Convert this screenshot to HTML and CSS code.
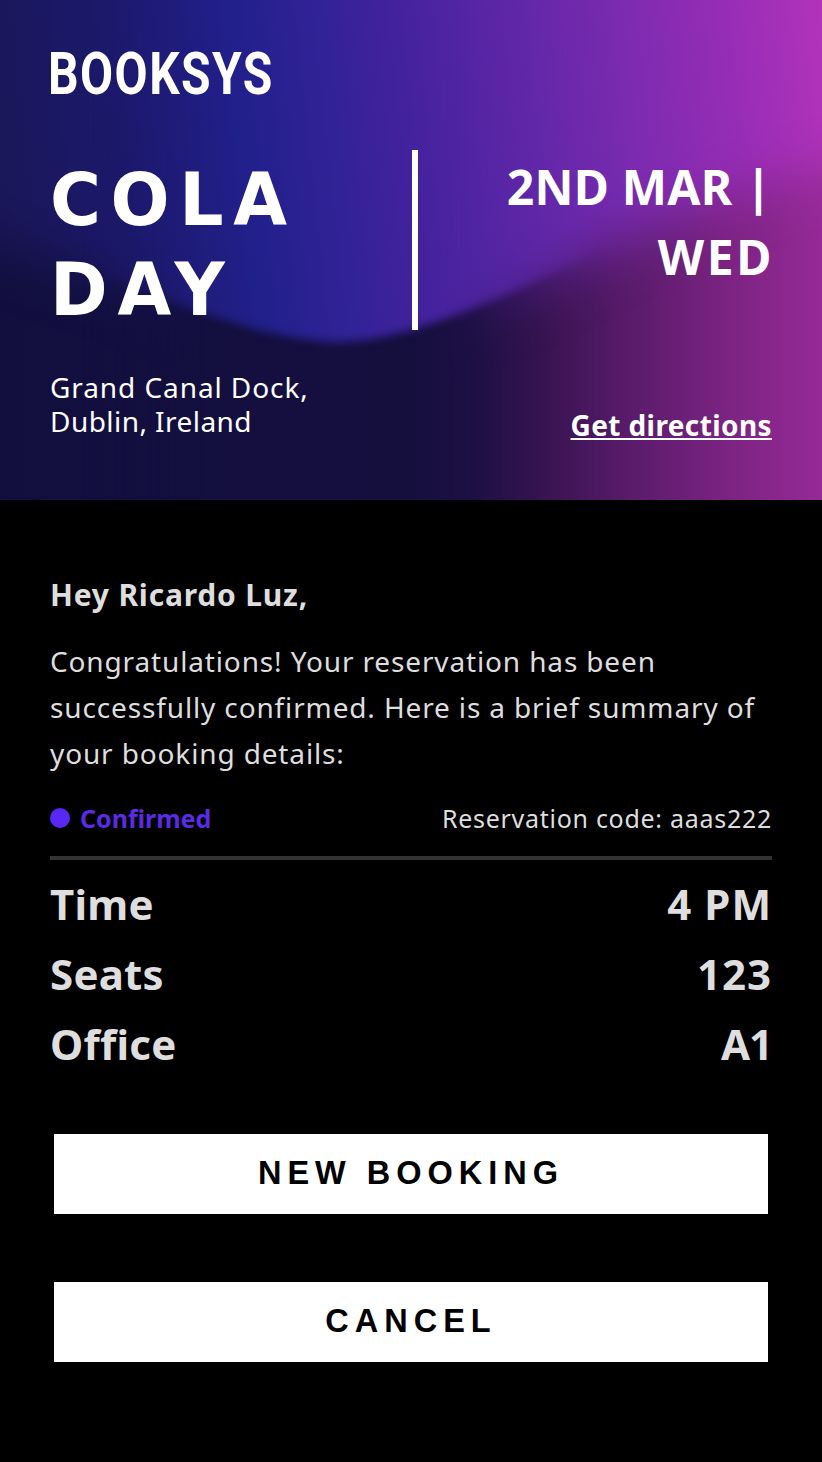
FILE: index.html
```html
<!DOCTYPE html>
<html lang="en">
<head>
<meta charset="utf-8">
<title>BOOKSYS – Cola Day</title>
<link rel="stylesheet" href="styles.css">
</head>
<body>
<header class="hero">
  <svg class="hero-art" viewBox="0 0 822 500" preserveAspectRatio="none" aria-hidden="true">
    <defs>
      <linearGradient id="sky" gradientUnits="userSpaceOnUse" x1="-8" y1="90" x2="822" y2="0">
        <stop offset="0" stop-color="#1a175a"/>
        <stop offset=".15" stop-color="#1c196c"/>
        <stop offset=".3" stop-color="#22208c"/>
        <stop offset=".39" stop-color="#302296"/>
        <stop offset=".5" stop-color="#45229e"/>
        <stop offset=".63" stop-color="#5f27a8"/>
        <stop offset=".76" stop-color="#7c2bb0"/>
        <stop offset=".89" stop-color="#982db6"/>
        <stop offset="1" stop-color="#b333bb"/>
      </linearGradient>
      <linearGradient id="ground" gradientUnits="userSpaceOnUse" x1="0" y1="0" x2="822" y2="0">
        <stop offset="0" stop-color="#120f3f"/>
        <stop offset=".5" stop-color="#150f3e"/>
        <stop offset=".58" stop-color="#1e1044"/>
        <stop offset=".65" stop-color="#34134f"/>
        <stop offset=".76" stop-color="#571b69"/>
        <stop offset=".88" stop-color="#7a2381"/>
        <stop offset="1" stop-color="#962a97"/>
      </linearGradient>
      <linearGradient id="mid" gradientUnits="userSpaceOnUse" x1="0" y1="0" x2="822" y2="0">
        <stop offset=".1" stop-color="#000"/>
        <stop offset=".25" stop-color="#fff"/>
        <stop offset=".54" stop-color="#fff"/>
        <stop offset=".74" stop-color="#000"/>
      </linearGradient>
      <filter id="soft" x="-20%" y="-20%" width="140%" height="140%"><feGaussianBlur stdDeviation="26"/></filter>
      <filter id="crisp" x="-20%" y="-20%" width="140%" height="140%"><feGaussianBlur stdDeviation="4"/></filter>
      <mask id="midMask" maskUnits="userSpaceOnUse" x="0" y="0" width="822" height="500"><rect width="822" height="500" fill="url(#mid)"/></mask>
      <mask id="softMask" maskUnits="userSpaceOnUse" x="0" y="0" width="822" height="500">
        <path filter="url(#soft)" fill="#fff" d="M-100-100H950V145C822 160 720 200 640 235C550 274 470 330 335 338C240 338 180 300 110 280C70 265 30 255-100 215Z"/>
      </mask>
      <mask id="crispMask" maskUnits="userSpaceOnUse" x="0" y="0" width="822" height="500">
        <path filter="url(#crisp)" fill="#fff" d="M-100-100H950V180C822 175 720 200 640 232C570 266 510 295 450 317C405 333 370 342 335 342C285 340 240 326 180 305C140 288 70 265-100 215Z"/>
      </mask>
    </defs>
    <rect width="822" height="500" fill="url(#ground)"/>
    <g mask="url(#softMask)"><rect width="822" height="500" fill="url(#sky)"/></g>
    <g mask="url(#midMask)">
      <rect width="822" height="500" fill="url(#ground)"/>
      <g mask="url(#crispMask)"><rect width="822" height="500" fill="url(#sky)"/></g>
    </g>
  </svg>
  <div class="hero-content">
    <div class="logo"><span class="logo-text">BOOKSYS</span></div>
    <div class="event">
      <h1 class="title"><span class="title-a">COLA</span><span class="title-b">DAY</span></h1>
      <div class="divider"></div>
      <p class="date"><span class="date-day">2ND MAR |</span><span class="date-week">WED</span></p>
    </div>
    <div class="place">
      <p class="address"><span class="addr-a">Grand Canal Dock,</span><span class="addr-b">Dublin, Ireland</span></p>
      <a class="directions" href="#">Get directions</a>
    </div>
  </div>
</header>
<main class="content">
  <p class="greeting">Hey Ricardo Luz,</p>
  <p class="message">Congratulations! Your reservation has been<br>successfully confirmed. Here is a brief summary of<br>your booking details:</p>
  <div class="status-row">
    <span class="status"><i class="dot"></i><span class="status-text">Confirmed</span></span>
    <span class="code">Reservation code: aaas222</span>
  </div>
  <dl class="details">
    <div class="detail"><dt>Time</dt><dd class="v-time">4 PM</dd></div>
    <div class="detail"><dt>Seats</dt><dd class="v-seats">123</dd></div>
    <div class="detail"><dt>Office</dt><dd class="v-office">A1</dd></div>
  </dl>
  <div class="actions">
    <button class="btn" type="button">NEW BOOKING</button>
    <button class="btn" type="button">CANCEL</button>
  </div>
</main>
</body>
</html>
```
FILE: styles.css
```css
* { box-sizing: border-box; }
body {
  margin: 0;
  background: #000;
  color: #dedede;
  font-family: "Noto Sans", "Open Sans", sans-serif;
}
h1, p, dl, dd { margin: 0; }
.hero { position: relative; height: 500px; color: #fff; overflow: hidden; }
.hero-art { position: absolute; inset: 0; width: 100%; height: 100%; }
.hero-content { position: relative; height: 500px; padding: 0 50px; }
.logo { height: 150px; padding-top: 41px; }
.logo-text {
  display: inline-block;
  margin-left: -2px;
  font: 700 60px/66px Roboto, sans-serif;
  letter-spacing: 1.8px;
  transform: scaleX(.8);
  transform-origin: 0 50%;
}
.event { display: grid; grid-template: 180px / 362px 6px 1fr; height: 180px; }
.title {
  padding-top: 5px;
  font: 700 73.5px/90px "DejaVu Sans", sans-serif;
  transform: scaleX(.945);
  transform-origin: 0 50%;
}
.title span { display: block; }
.title-a { letter-spacing: 10.2px; }
.title-b { letter-spacing: 10.5px; }
.divider { background: #fff; }
.date { padding-top: 2px; font-size: 48px; font-weight: 700; line-height: 70px; text-align: right; white-space: nowrap; }
.date span { display: block; }
.date-day { letter-spacing: .25px; }
.date-week { margin-right: -2px; letter-spacing: 2.6px; }
.place { display: flex; justify-content: space-between; padding-top: 40px; }
.address { font-size: 28px; line-height: 34px; }
.address span { display: block; }
.addr-a { letter-spacing: .92px; }
.addr-b { letter-spacing: .45px; }
.directions {
  margin-top: 38px;
  color: #fff;
  font-size: 28px;
  font-weight: 700;
  line-height: 34px;
  letter-spacing: .4px;
  text-decoration-thickness: 2px;
  text-underline-offset: 2px;
  text-decoration-skip-ink: none;
}
.content { padding: 72px 50px 0; }
.greeting { font-size: 30px; font-weight: 700; line-height: 46px; letter-spacing: .8px; }
.message {
  padding-top: 20px;
  font-size: 28px;
  line-height: 46px;
  letter-spacing: .86px;
  white-space: nowrap;
}
.status-row {
  display: flex;
  align-items: center;
  justify-content: space-between;
  height: 84px;
  padding-top: 4px;
  border-bottom: 4px solid #333;
  font-size: 25px;
}
.code { letter-spacing: .72px; }
.status { display: flex; align-items: center; gap: 10px; color: #5a2be2; font-weight: 700; }
.dot { width: 20px; height: 20px; border-radius: 50%; background: #5a28f5; }
.details { padding-top: 9px; font-size: 42px; font-weight: 700; line-height: 70px; }
.detail { display: flex; justify-content: space-between; }
.detail dt { letter-spacing: .25px; }
.v-time, .v-seats { letter-spacing: 1px; }
.v-office { letter-spacing: -1px; }
.actions { display: grid; gap: 68px; padding: 55px 4px 0; }
.btn {
  height: 80px;
  padding: 0 0 2px;
  border: 0;
  background: #fff;
  color: #000;
  font: 700 32.5px "Liberation Sans", Arial, sans-serif;
  letter-spacing: 6px;
}
```
